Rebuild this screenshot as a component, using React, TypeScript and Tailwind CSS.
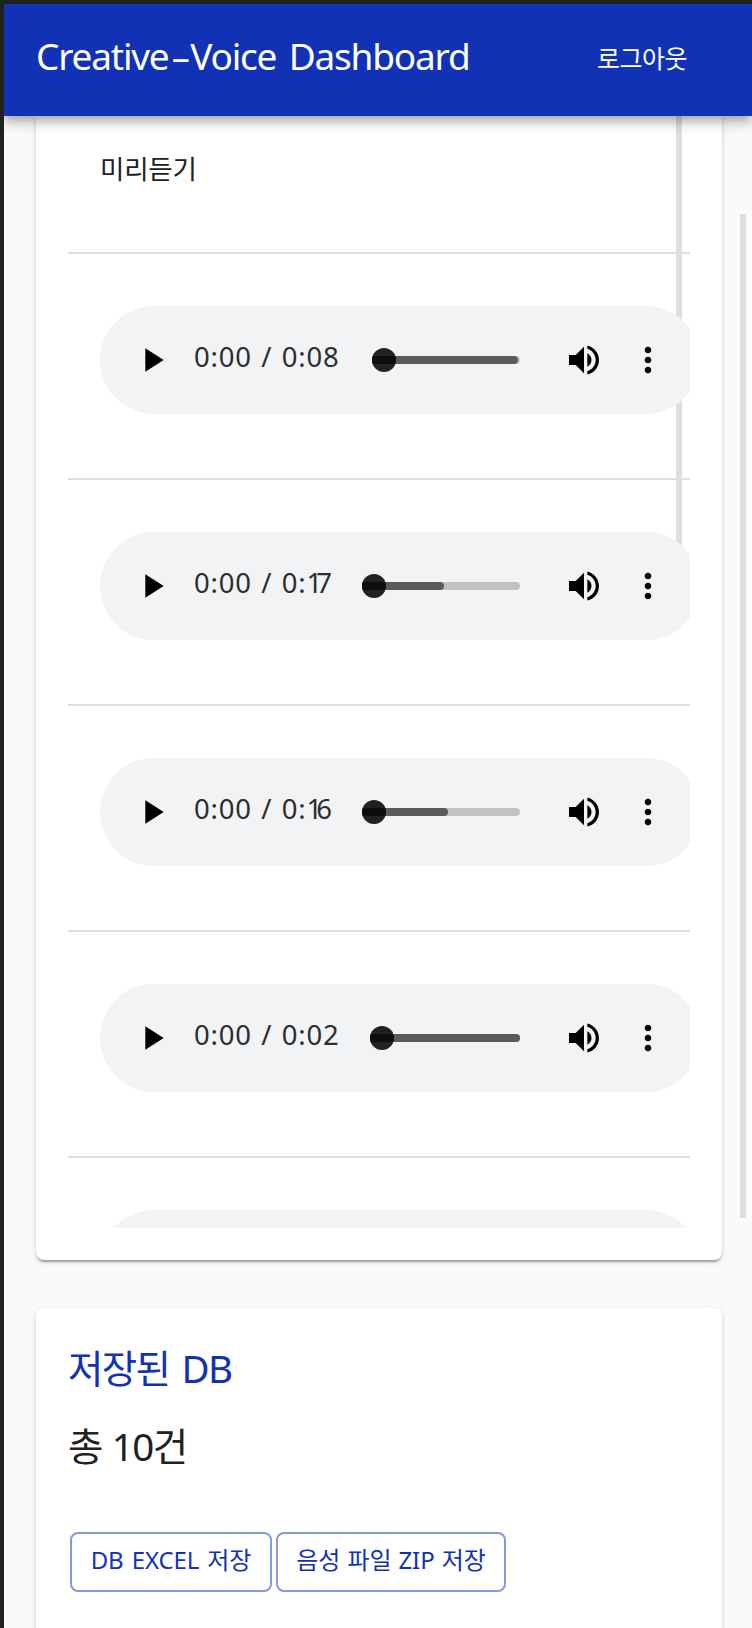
import React from "react";

type Clip = { id: number; time: string; thumb: number; buffered: number };

const clips: Clip[] = [
  { id: 1, time: "0:00 / 0:08", thumb: 372, buffered: 518 },
  { id: 2, time: "0:00 / 0:17", thumb: 362, buffered: 444 },
  { id: 3, time: "0:00 / 0:16", thumb: 362, buffered: 448 },
  { id: 4, time: "0:00 / 0:02", thumb: 370, buffered: 520 },
];

const TRACK_END = 520;

// The digit 1 is set tighter than the tabular width of the other digits.
function Time({ value }: { value: string }) {
  return (
    <>
      {value.split("").map((ch, i) =>
        ch === "1" ? (
          <span key={i} className="tracking-[-6px]">1</span>
        ) : (
          <React.Fragment key={i}>{ch}</React.Fragment>
        ),
      )}
    </>
  );
}

function Player({ clip }: { clip: Clip }) {
  return (
    <div className="relative z-10 flex h-[108px] w-[600px] shrink-0 items-center rounded-[54px] bg-[#f1f3f4] pl-8">
      <svg viewBox="0 0 24 24" className="h-10 w-10 shrink-0">
        <path d="M8 5v14l11-7z" />
      </svg>
      <div className="-mt-[7px] ml-[22px] h-10 flex-1 whitespace-nowrap text-[27.5px] leading-10 tracking-[0.8px] text-[#2c2e31] [word-spacing:1.5px]">
        <Time value={clip.time} />
      </div>
      <div
        className="relative h-2 shrink-0 rounded-full bg-[#c1c2c3]"
        style={{ width: TRACK_END - clip.thumb }}
      >
        <div
          className="h-2 rounded-full bg-[#5a5b5b]"
          style={{ width: clip.buffered - clip.thumb }}
        />
        <div className="absolute -top-2 left-0 flex h-6 w-6 items-center overflow-hidden rounded-full bg-[#202222]">
          <div className="h-2 w-6 bg-[#0c0d0d]" />
        </div>
      </div>
      <svg viewBox="0 0 24 24" className="ml-11 h-10 w-10 shrink-0">
        <path d="M3 9v6h4l5 5V4L7 9H3zm13.5 3c0-1.77-1.02-3.29-2.5-4.03v8.05c1.48-.73 2.5-2.25 2.5-4.02zM14 3.23v2.06c2.89.86 5 3.54 5 6.71s-2.11 5.85-5 6.71v2.06c4.01-.91 7-4.49 7-8.77s-2.99-7.86-7-8.77z" />
      </svg>
      <svg viewBox="0 0 24 24" className="mr-8 ml-6 h-10 w-10 shrink-0">
        <path d="M12 8c1.1 0 2-.9 2-2s-.9-2-2-2-2 .9-2 2 .9 2 2 2zm0 2c-1.1 0-2 .9-2 2s.9 2 2 2 2-.9 2-2-.9-2-2-2zm0 6c-1.1 0-2 .9-2 2s.9 2 2 2 2-.9 2-2-.9-2-2-2z" />
      </svg>
    </div>
  );
}

const cardShadow =
  "shadow-[0_4px_2px_-2px_rgba(0,0,0,0.2),0_2px_2px_0_rgba(0,0,0,0.14),0_2px_6px_0_rgba(0,0,0,0.12)]";

export default function App() {
  return (
    <div className="h-[1628px] w-[752px] overflow-hidden bg-[#212121] pt-1 pl-1 font-['Noto_Sans','Noto_Sans_CJK_KR',sans-serif] text-[#212121]">
      <div className="relative flex h-[1624px] flex-col overflow-hidden bg-[#fafafa]">
        <header className="relative z-20 flex h-28 shrink-0 items-center justify-between bg-[#1232b6] pr-[65px] pl-8 text-white shadow-[0_4px_8px_-2px_rgba(0,0,0,0.2),0_8px_10px_0_rgba(0,0,0,0.14),0_2px_20px_0_rgba(0,0,0,0.12)]">
          <h1 className="-mt-2 whitespace-nowrap text-[37px] tracking-[-1.2px] [word-spacing:4px]">
            Creative<span className="inline-block scale-x-[1.7] px-[5.5px]">-</span>Voice Dashboard
          </h1>
          <button className="-mt-[3px] whitespace-nowrap text-[25px] tracking-[-0.5px]">로그아웃</button>
        </header>

        <section className={`ml-8 h-[1144px] w-[686px] shrink-0 rounded-b-lg bg-white px-8 pb-8 ${cardShadow}`}>
          <div className="relative h-[1112px] overflow-hidden">
            <div className="absolute top-0 right-2 h-[440px] w-1.5 bg-[#dedede]" />
            <div className="flex h-[138px] items-center border-b-2 border-[#e0e0e0] px-8 pb-[28px] text-[26.5px] tracking-[-0.2px]">
              미리듣기
            </div>
            {clips.map((clip) => (
              <div key={clip.id} className="flex h-[226px] border-b-2 border-[#e0e0e0] pt-[52px] pl-8">
                <Player clip={clip} />
              </div>
            ))}
            <div className="flex pt-[52px] pl-8">
              <div className="h-[108px] w-[600px] shrink-0 rounded-[54px] bg-[#f1f3f4]" />
            </div>
          </div>
        </section>

        <section className={`mt-12 ml-8 h-[400px] w-[686px] shrink-0 rounded-t-lg bg-white px-8 pt-8 ${cardShadow}`}>
          <h2 className="h-14 whitespace-nowrap text-[38.5px] leading-[56px] tracking-[-1.7px] text-[#1232b6] [word-spacing:4px]">
            저장된 DB
          </h2>
          <p className="mt-[22px] h-14 whitespace-nowrap text-[38.5px] leading-[56px] tracking-[-1.4px] [word-spacing:1px]">총 10건</p>
          <div className="mt-[58px] ml-0.5 flex gap-1 text-[24px] text-[#1232b6]">
            <button className="h-[60px] w-[202px] whitespace-nowrap rounded-lg border-2 border-[#8898da] pb-1 tracking-[-0.1px] [word-spacing:2px]">
              DB EXCEL 저장
            </button>
            <button className="h-[60px] w-[230px] whitespace-nowrap rounded-lg border-2 border-[#8898da] pb-1 tracking-[-0.1px] [word-spacing:1px]">
              음성 파일 ZIP 저장
            </button>
          </div>
        </section>

        <div className="absolute top-[210px] right-1.5 h-[1004px] w-1.5 bg-[#dedede]" />
      </div>
    </div>
  );
}
